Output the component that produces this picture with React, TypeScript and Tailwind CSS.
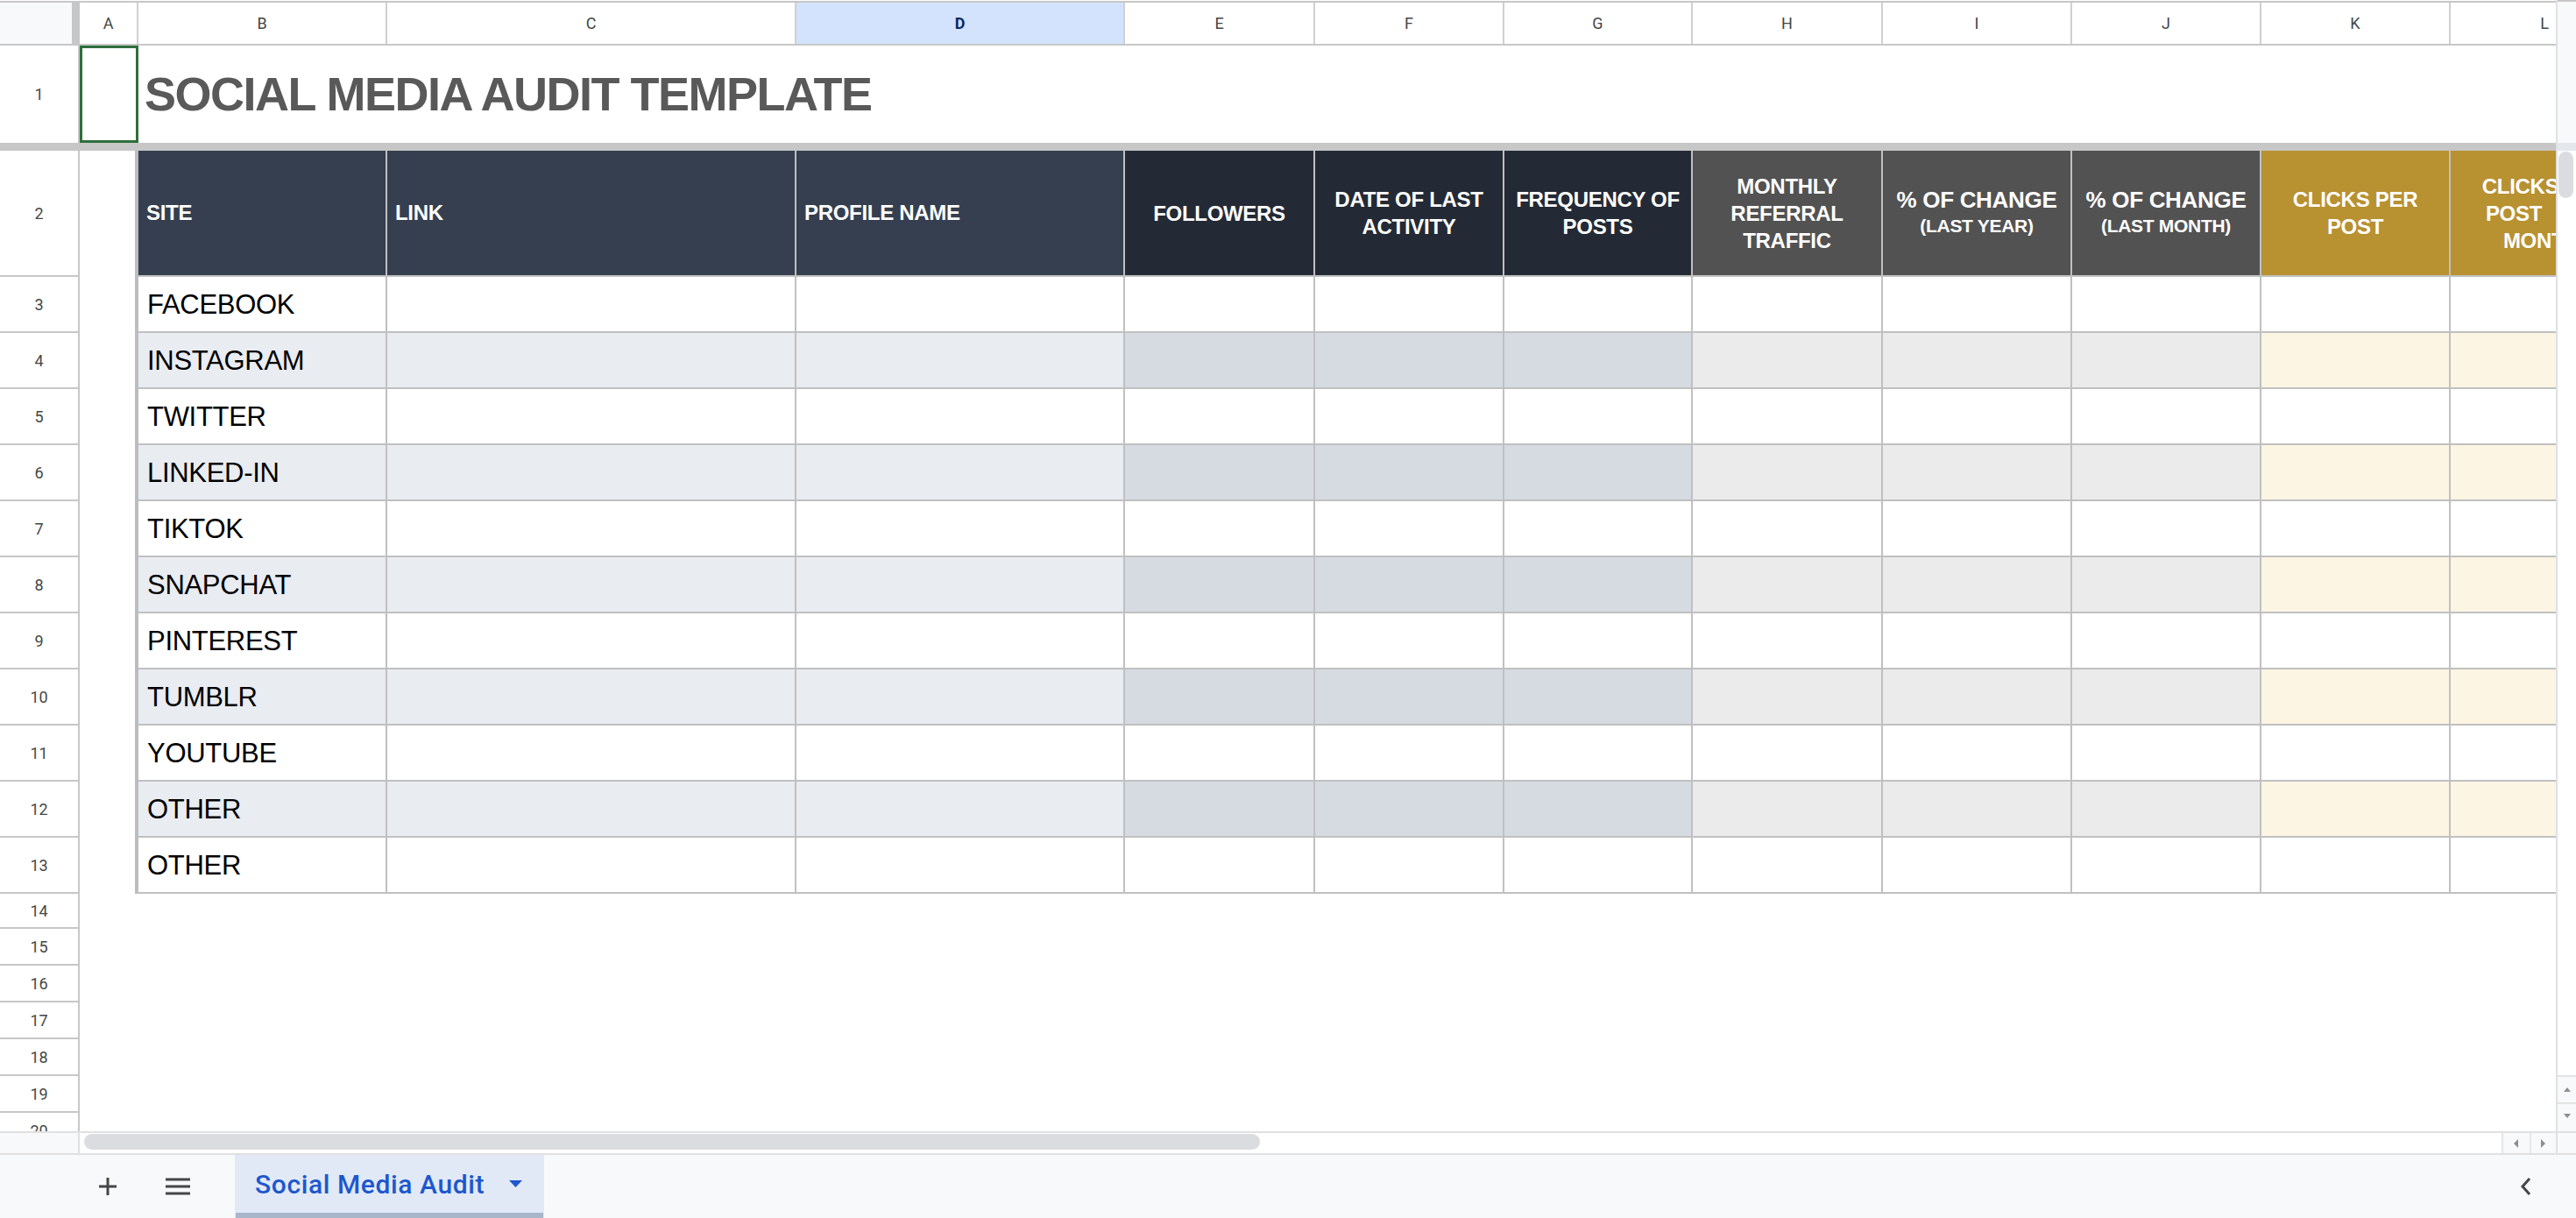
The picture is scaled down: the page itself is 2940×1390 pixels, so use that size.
import React from "react";

// column widths: row header, A..L
const W = [
  "w-[91px]",
  "w-[67px]",
  "w-[284px]",
  "w-[467px]",
  "w-[375px]",
  "w-[217px]",
  "w-[216px]",
  "w-[215px]",
  "w-[217px]",
  "w-[216px]",
  "w-[216px]",
  "w-[216px]",
  "w-[216px]",
];

const LETTERS = ["A", "B", "C", "D", "E", "F", "G", "H", "I", "J", "K", "L"];

const SITES = [
  "FACEBOOK",
  "INSTAGRAM",
  "TWITTER",
  "LINKED-IN",
  "TIKTOK",
  "SNAPCHAT",
  "PINTEREST",
  "TUMBLR",
  "YOUTUBE",
  "OTHER",
  "OTHER",
];

// header fill per data column B..L
const HEAD_BG = [
  "bg-[#353f4f]",
  "bg-[#353f4f]",
  "bg-[#353f4f]",
  "bg-[#242a35]",
  "bg-[#242a35]",
  "bg-[#242a35]",
  "bg-[#525252]",
  "bg-[#525252]",
  "bg-[#525252]",
  "bg-[#b89131]",
  "bg-[#b89131]",
];

// shaded row fill per data column B..L
const BAND_BG = [
  "bg-[#e9ecf1]",
  "bg-[#e9ecf1]",
  "bg-[#e9ecf1]",
  "bg-[#d6dbe2]",
  "bg-[#d6dbe2]",
  "bg-[#d6dbe2]",
  "bg-[#ebebeb]",
  "bg-[#ebebeb]",
  "bg-[#ebebeb]",
  "bg-[#fdf5e3]",
  "bg-[#fdf5e3]",
];

const FONT = "font-['Liberation_Sans',Arial,sans-serif]";

function RowHead({ n, h }: { n: number; h: string }) {
  return (
    <div
      className={`${W[0]} ${h} flex shrink-0 items-center justify-center border-r-2 border-b-2 border-[#c7c7c7] font-[Roboto,sans-serif] text-[18px] text-[#444746]`}
    >
      {n}
    </div>
  );
}

function HeaderText({ lines }: { lines: string[] }) {
  return (
    <div className="text-center text-[24px] leading-[31px] font-bold tracking-[-0.3px] text-white">
      {lines.map((l, i) => (
        <div key={i} className="whitespace-pre">
          {l}
        </div>
      ))}
    </div>
  );
}

function ChangeText({ sub }: { sub: string }) {
  return (
    <div className="text-center font-bold tracking-[-0.3px] text-white">
      <div className="text-[26px] leading-[30px] whitespace-nowrap">% OF CHANGE</div>
      <div className="text-[21px] leading-[30px] whitespace-nowrap">{sub}</div>
    </div>
  );
}

function headerContent(i: number) {
  switch (i) {
    case 0:
      return "SITE";
    case 1:
      return "LINK";
    case 2:
      return "PROFILE NAME";
    case 3:
      return <HeaderText lines={["FOLLOWERS"]} />;
    case 4:
      return <HeaderText lines={["DATE OF LAST", "ACTIVITY"]} />;
    case 5:
      return <HeaderText lines={["FREQUENCY OF", "POSTS"]} />;
    case 6:
      return <HeaderText lines={["MONTHLY", "REFERRAL", "TRAFFIC"]} />;
    case 7:
      return <ChangeText sub="(LAST YEAR)" />;
    case 8:
      return <ChangeText sub="(LAST MONTH)" />;
    case 9:
      return <HeaderText lines={["CLICKS PER", "POST"]} />;
    default:
      // column L is cut by the scrollbar; only the left part of the lines shows
      return <HeaderText lines={["CLICKS PER", "POST           ", "MONTH)"]} />;
  }
}

function Arrow({ dir }: { dir: "up" | "down" | "left" | "right" }) {
  const pts = {
    up: "1,7 5,2 9,7",
    down: "1,2 5,7 9,2",
    left: "7,0 7,10 2,5",
    right: "2,0 2,10 7,5",
  }[dir];
  return (
    <svg width="10" height="10" viewBox="0 0 10 10">
      <polygon points={pts} fill="#8e8e8e" />
    </svg>
  );
}

export default function App() {
  return (
    <div className={`flex h-[1390px] w-[2940px] flex-col overflow-hidden bg-white ${FONT}`}>
      <div className="flex h-[1291px] shrink-0">
        {/* sheet grid */}
        <div className="flex h-[1291px] w-[2917px] shrink-0 flex-col overflow-hidden">
          <div className="h-[3px] w-[3013px] shrink-0 border-b-2 border-[#c7c7c7]" />

          {/* column letters */}
          <div className="flex h-[49px] w-[3013px] shrink-0 border-b-2 border-[#c7c7c7] font-[Roboto,sans-serif] text-[18px] text-[#444746]">
            <div className={`${W[0]} shrink-0 border-r-[9px] border-[#c7c7c7] bg-[#f8f9fa]`} />
            {LETTERS.map((l, i) => (
              <div
                key={l}
                className={`${W[i + 1]} flex shrink-0 items-center justify-center border-r-2 border-[#d0d0d0] ${
                  l === "D" ? "bg-[#d3e3fd] font-bold text-[#0b2a5e]" : ""
                }`}
              >
                {l}
              </div>
            ))}
          </div>

          {/* row 1: title */}
          <div className="flex h-[111px] w-[3013px] shrink-0">
            <div
              className={`${W[0]} flex shrink-0 items-center justify-center border-r-2 border-[#c7c7c7] font-[Roboto,sans-serif] text-[18px] text-[#444746]`}
            >
              1
            </div>
            <div className={`${W[1]} shrink-0 border-[3px] border-[#2e6f3c]`} />
            <div className="flex items-center pl-[7px] text-[54px] font-bold tracking-[-1.5px] whitespace-nowrap text-[#595959]">
              SOCIAL MEDIA AUDIT TEMPLATE
            </div>
          </div>

          {/* frozen divider */}
          <div className="h-[9px] w-[3013px] shrink-0 bg-[#c7c7c7]" />

          {/* row 2: table header */}
          <div className="flex h-[144px] w-[3013px] shrink-0">
            <RowHead n={2} h="h-[144px]" />
            <div className={`${W[1]} shrink-0 border-r-4 border-[#bdbdbd]`} />
            {HEAD_BG.map((bg, i) => (
              <div
                key={i}
                className={`${W[i + 2]} ${bg} flex shrink-0 items-center border-r-2 border-b-2 border-[#c0c0c0] ${
                  i < 3 ? "justify-start pl-[9px] text-[24px] font-bold tracking-[-0.3px] text-white" : "justify-center overflow-hidden"
                }`}
              >
                {headerContent(i)}
              </div>
            ))}
          </div>

          {/* rows 3-13 */}
          {SITES.map((site, r) => {
            const band = r % 2 === 1;
            return (
              <div key={r} className="flex h-[64px] w-[3013px] shrink-0">
                <RowHead n={r + 3} h="h-[64px]" />
                <div className={`${W[1]} shrink-0 border-r-4 border-[#bdbdbd]`} />
                {BAND_BG.map((bg, i) => (
                  <div
                    key={i}
                    className={`${W[i + 2]} ${band ? bg : "bg-white"} flex shrink-0 items-center border-r-2 border-b-2 border-[#c0c0c0]`}
                  >
                    {i === 0 && (
                      <span className="pl-[10px] text-[31px] leading-none tracking-[-0.3px] whitespace-nowrap text-black">
                        {site}
                      </span>
                    )}
                  </div>
                ))}
              </div>
            );
          })}

          {/* rows 14-20 */}
          {[14, 15, 16, 17, 18, 19, 20].map((n) => (
            <div key={n} className={`flex w-[3013px] shrink-0 ${n === 14 ? "h-[40px]" : "h-[42px]"}`}>
              <RowHead n={n} h={n === 14 ? "h-[40px]" : "h-[42px]"} />
            </div>
          ))}
        </div>

        {/* vertical scrollbar */}
        <div className="flex h-[1291px] w-[23px] shrink-0 flex-col border-l-2 border-[#dfe1e4]">
          <div className="h-[163px] shrink-0 border-t-2 border-[#c7c7c7] bg-[#f8f9fa]" />
          <div className="h-[9px] shrink-0 bg-[#e4e7eb]" />
          <div className="flex-1 bg-white pt-[1px]">
            <div className="ml-[1px] h-[53px] w-[17px] rounded-full bg-[#dadce0]" />
          </div>
          <div className="flex h-[31px] shrink-0 items-center justify-center border-t-2 border-[#e3e3e3] bg-[#f8f9fa]">
            <Arrow dir="up" />
          </div>
          <div className="flex h-[30px] shrink-0 items-center justify-center border-t-2 border-[#e3e3e3] bg-[#f8f9fa]">
            <Arrow dir="down" />
          </div>
          <div className="h-[3px] shrink-0 bg-[#f8f9fa]" />
        </div>
      </div>

      {/* horizontal scrollbar */}
      <div className="flex h-[25px] shrink-0 border-t-2 border-[#e0e0e0]">
        <div className="w-[91px] shrink-0 border-r-2 border-[#e0e0e0] bg-[#f8f9fa]" />
        <div className="flex-1 bg-white pt-[1px] pl-[5px]">
          <div className="h-[18px] w-[1342px] rounded-full bg-[#dadce0]" />
        </div>
        <div className="flex w-[32px] shrink-0 items-center justify-center border-l-2 border-[#e6e6e6] bg-[#f8f9fa]">
          <Arrow dir="left" />
        </div>
        <div className="flex w-[30px] shrink-0 items-center justify-center border-l-2 border-[#e6e6e6] bg-[#f8f9fa]">
          <Arrow dir="right" />
        </div>
        <div className="w-[23px] shrink-0 border-l-2 border-[#e0e0e0] bg-[#f8f9fa]" />
      </div>

      {/* sheet tabs */}
      <div className="flex h-[74px] shrink-0 items-stretch border-t-2 border-[#e0e0e0] bg-[#f8f9fa]">
        <div className="ml-[112px] flex items-center">
          <svg width="22" height="22" viewBox="0 0 22 22">
            <path d="M11 1v20M1 11h20" stroke="#444746" strokeWidth="3" />
          </svg>
        </div>
        <div className="ml-[55px] flex items-center">
          <svg width="28" height="20" viewBox="0 0 28 20">
            <path d="M0 2h28M0 10h28M0 18h28" stroke="#444746" strokeWidth="3" />
          </svg>
        </div>
        <div className="ml-[51px] flex w-[353px] flex-col bg-[#e1e9f7]">
          <div className="flex flex-1 items-center pl-[23px]">
            <span className="font-[Roboto,sans-serif] text-[30px] font-medium tracking-[0.6px] whitespace-nowrap text-[#1d57cd]">
              Social Media Audit
            </span>
            <svg className="ml-[28px]" width="15" height="8" viewBox="0 0 15 8">
              <polygon points="0,0 15,0 7.5,8" fill="#1d57cd" />
            </svg>
          </div>
          <div className="mx-[1px] h-[6px] bg-[#a9b5c9]" />
        </div>
        <div className="mr-[50px] ml-auto flex items-center">
          <svg width="14" height="22" viewBox="0 0 14 22">
            <polyline points="11,2 3,11 11,20" fill="none" stroke="#444746" strokeWidth="3" />
          </svg>
        </div>
      </div>
    </div>
  );
}
